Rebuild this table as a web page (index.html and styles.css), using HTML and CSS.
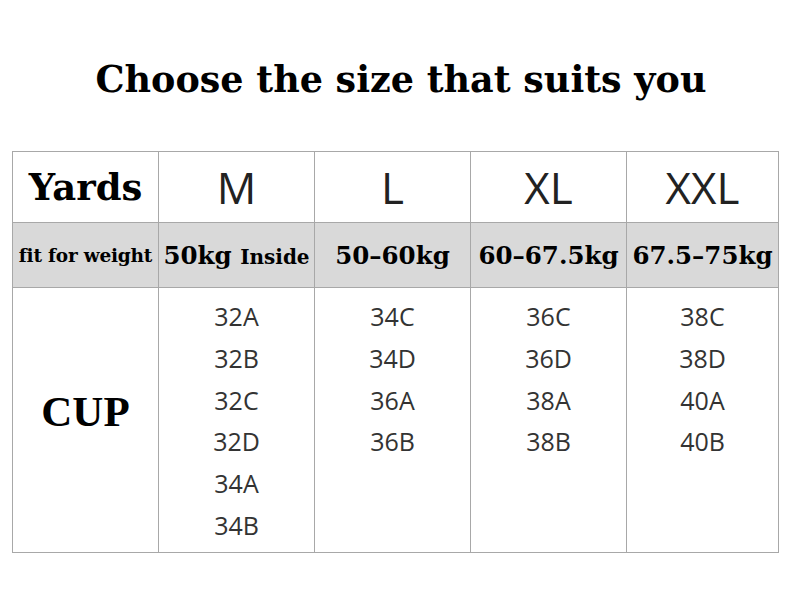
FILE: index.html
```html
<!DOCTYPE html>
<html>
<head>
<meta charset="utf-8">
<link rel="stylesheet" href="styles.css">
</head>
<body>
<h1 class="title">Choose the size that suits you</h1>
<table class="chart">
  <colgroup>
    <col class="c0"><col class="c1"><col class="c2"><col class="c3"><col class="c4">
  </colgroup>
  <tr class="head">
    <th class="label">Yards</th>
    <th class="size">M</th>
    <th class="size">L</th>
    <th class="size">XL</th>
    <th class="size">XXL</th>
  </tr>
  <tr class="weight">
    <td class="wlabel">fit for weight</td>
    <td class="wval"><span class="big">50kg</span> <span class="small">Inside</span></td>
    <td class="wval">50–60kg</td>
    <td class="wval">60–67.5kg</td>
    <td class="wval">67.5–75kg</td>
  </tr>
  <tr class="cups">
    <td class="cuplabel"><span class="cuptext">CUP</span></td>
    <td class="cuplist"><div class="items"><div>32A</div><div>32B</div><div>32C</div><div>32D</div><div>34A</div><div>34B</div></div></td>
    <td class="cuplist"><div class="items"><div>34C</div><div>34D</div><div>36A</div><div>36B</div></div></td>
    <td class="cuplist"><div class="items"><div>36C</div><div>36D</div><div>38A</div><div>38B</div></div></td>
    <td class="cuplist"><div class="items"><div>38C</div><div>38D</div><div>40A</div><div>40B</div></div></td>
  </tr>
</table>
</body>
</html>
```
FILE: styles.css
```css
html, body {
  margin: 0;
  padding: 0;
  background: #ffffff;
}
body {
  width: 790px;
  height: 598px;
  overflow: hidden;
}
.title {
  margin: 0;
  padding-top: 58px;
  padding-left: 12px;
  height: 96px;
  box-sizing: border-box;
  text-align: center;
  font-family: "DejaVu Serif", "Liberation Serif", serif;
  font-weight: bold;
  font-size: 36.5px;
  line-height: 44px;
  color: #000;
}
.chart {
  margin-top: 55px;
  margin-left: 12px;
  border-collapse: collapse;
  table-layout: fixed;
  width: 766px;
}
.c0 { width: 146px; }
.c1 { width: 156px; }
.c2 { width: 156px; }
.c3 { width: 156px; }
.c4 { width: 152px; }
.chart th, .chart td {
  border: 1px solid #a8a8a8;
  padding: 0;
  text-align: center;
}
.head th {
  height: 70px;
  font-weight: normal;
}
.label {
  font-family: "DejaVu Serif", "Liberation Serif", serif;
  font-weight: bold !important;
  font-size: 37px;
  color: #000;
}
.size {
  font-family: "Open Sans", "Noto Sans", sans-serif;
  font-size: 44px;
  font-weight: 500 !important;
  color: #222;
}
.weight td {
  height: 64px;
  background: #d9d9d9;
  font-family: "DejaVu Serif", "Liberation Serif", serif;
  font-weight: bold;
  color: #000;
  white-space: nowrap;
}
.wlabel {
  font-size: 18.5px;
  letter-spacing: -0.2px;
}
.wval {
  font-size: 24.5px;
}
.wval .big { font-size: 24.5px; }
.wval .small { font-size: 20px; }
.cups td {
  height: 264px;
  vertical-align: top;
}
.cuplabel {
  vertical-align: middle !important;
  font-family: "Liberation Serif", serif;
  font-weight: bold;
  font-size: 43px;
  color: #000;
}
.cuptext {
  display: block;
  margin-bottom: 18px;
}
.items {
  padding-top: 8px;
  font-family: "Open Sans", "Noto Sans", sans-serif;
  font-size: 25px;
  line-height: 41.8px;
  color: #333;
}
```
